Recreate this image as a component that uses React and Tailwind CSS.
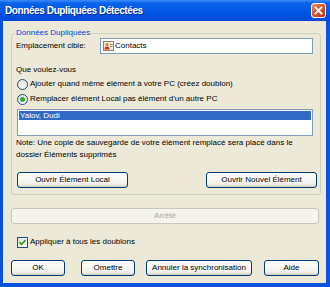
import React from "react";

function XpButton({ className = "", children }) {
  return (
    <button
      type="button"
      className={`h-[16px] rounded-[3px] border border-[#003C74] bg-[linear-gradient(#FFFFFF,#F4F3EE_70%,#DCD9CC)] shadow-[inset_0_-1px_0_#D6D0C5] text-[8px] text-black leading-none flex items-center justify-center ${className}`}
    >
      {children}
    </button>
  );
}

function Radio({ checked, label }) {
  return (
    <div className="h-[12px] flex items-center gap-[2px]">
      <span className="w-[11px] h-[11px] rounded-full border border-[#1C5180] bg-[linear-gradient(135deg,#DCDCD7,#FFFFFF)] flex items-center justify-center">
        {checked && <span className="w-[5px] h-[5px] rounded-full bg-[#2FB12F]" />}
      </span>
      <span>{label}</span>
    </div>
  );
}

function ContactIcon() {
  return (
    <svg width="11" height="10" viewBox="0 0 11 10" className="shrink-0">
      <rect x="0.5" y="0.5" width="10" height="9" fill="#EFE9D6" stroke="#8C8468" />
      <circle cx="4" cy="3.5" r="1.6" fill="#E8772E" />
      <path d="M1.5 8.5 C1.5 6 2.5 5.4 4 5.4 C5.5 5.4 6.5 6 6.5 8.5 Z" fill="#C7361B" />
      <rect x="7" y="3" width="2.5" height="1" fill="#8C8468" />
      <rect x="7" y="5" width="2.5" height="1" fill="#8C8468" />
    </svg>
  );
}

export default function App() {
  return (
    <div className="w-[330px] h-[287px] flex flex-col bg-[#0A53DE] font-['Liberation_Sans',Arial,sans-serif] text-[8px] text-black overflow-hidden">
      {/* Title bar */}
      <div className="h-[21px] shrink-0 flex items-center justify-between pl-[5px] pr-[4px] bg-[linear-gradient(#3E8CF6,#0A62EA_15%,#0056E6_55%,#0049D8)]">
        <span className="text-white font-bold text-[10px] tracking-[-0.4px] [text-shadow:1px_1px_#0B2D98]">
          Données Dupliquées Détectées
        </span>
        <span className="w-[15px] h-[15px] mt-[-1px] rounded-[3px] border border-white bg-[linear-gradient(135deg,#EE8A68,#D9532B_50%,#B9381A)] flex items-center justify-center">
          <svg width="9" height="9" viewBox="0 0 9 9">
            <path d="M1.5 1.5 L7.5 7.5 M7.5 1.5 L1.5 7.5" stroke="white" strokeWidth="1.8" strokeLinecap="square" />
          </svg>
        </span>
      </div>

      {/* Body */}
      <div className="flex-1 ml-[3px] mr-[4px] mb-[4px] bg-[#ECE9D8] flex flex-col">
        <fieldset className="mt-[7px] ml-[8px] mr-[5px] border border-[#D0D0BF] rounded-[3px] pl-[4px] pr-[3px] pb-[6px]">
          <legend className="px-[1px] ml-[-1px] text-[#0046D5] leading-[10px]">Données Dupliquées</legend>

          <div className="h-[16px] flex items-center">
            <span className="w-[84px]">Emplacement cible:</span>
            <div className="flex-1 mr-[4px] h-[16px] border border-[#7F9DB9] bg-white flex items-center gap-[1px] pl-[2px]">
              <ContactIcon />
              <span>Contacts</span>
            </div>
          </div>

          <div className="h-[12px] mt-[10px] flex items-center">Que voulez-vous</div>
          <div className="mt-[2px] ml-[1px]">
            <Radio label="Ajouter quand même élément à votre PC (créez doublon)" />
          </div>
          <div className="mt-[3px] ml-[1px]">
            <Radio checked label="Remplacer élément Local pas élément d'un autre PC" />
          </div>

          <div className="mt-[4px] ml-[1px] mr-[4px] h-[27px] border border-[#7F9DB9] bg-white pt-[1px] px-[1px]">
            <div className="h-[9px] bg-[#316AC5] text-white leading-[9px] pl-[1px]">Yalov, Dudi</div>
          </div>

          <p className="mt-[1px] leading-[12px]">
            Note: Une copie de sauvegarde de votre élément remplacé sera placé dans le
            <br />
            dossier Éléments supprimés
          </p>

          <div className="mt-[11px] ml-[1px] flex justify-between">
            <XpButton className="w-[111px]">Ouvrir Élément Local</XpButton>
            <XpButton className="w-[111px]">Ouvrir Nouvel Élément</XpButton>
          </div>
        </fieldset>

        <div className="mt-[13px] ml-[8px] mr-[7px] h-[16px] rounded-[3px] border border-[#C9C7BA] bg-[#F4F3EE] text-[#ACA899] flex items-center justify-center">
          Arrêté
        </div>

        <div className="mt-[12px] ml-[14px] h-[12px] flex items-center gap-[2px]">
          <span className="w-[11px] h-[11px] border border-[#1C5180] bg-[linear-gradient(135deg,#DCDCD7,#FFFFFF)] flex items-center justify-center">
            <svg width="9" height="9" viewBox="0 0 9 9">
              <path d="M1.5 4.2 L3.5 6.4 L7.6 2" fill="none" stroke="#21A121" strokeWidth="1.6" />
            </svg>
          </span>
          <span>Appliquer à tous les doublons</span>
        </div>

        <div className="mt-[12px] flex">
          <XpButton className="ml-[8px] w-[54px]">OK</XpButton>
          <XpButton className="ml-[16px] w-[54px]">Omettre</XpButton>
          <XpButton className="ml-[11px] w-[106px]">Annuler la synchronisation</XpButton>
          <XpButton className="ml-[12px] w-[55px]">Aide</XpButton>
        </div>
      </div>
    </div>
  );
}
